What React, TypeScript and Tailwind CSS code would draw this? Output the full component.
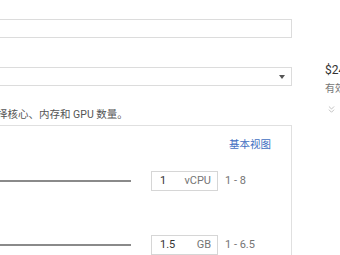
import { ChevronsDown } from "lucide-react";

const font = { fontFamily: '"Roboto", "Noto Sans CJK SC", sans-serif' };

// one row of the custom machine type: slider track + value box + range
const SpecRow = ({ value, unit, range }: { value: string; unit: string; range: string }) => (
  <div className="flex items-center h-[20px]">
    <div className="w-[138px] h-[2px] bg-[#8a8a8a]" />
    <div className="ml-[20px] w-[67px] h-[20px] border border-[#d6d6d6] flex items-center justify-between pl-[8px] pr-[6px] text-[11px] text-[#333]">
      <span>{value}</span>
      <span className="text-[#757575]">{unit}</span>
    </div>
    <span className="ml-[7px] text-[11px] text-[#757575]">{range}</span>
  </div>
);

export default function App() {
  return (
    <div className="w-[340px] h-[255px] overflow-hidden bg-white flex" style={font}>
      {/* Main column, left edge cut off */}
      <div className="ml-[-8px] w-[300px] shrink-0 flex flex-col">
        <div className="mt-[19px] h-[19px] border border-[#dcdcdc]" />

        <div className="mt-[29px] h-[19px] border border-[#dcdcdc] flex items-center justify-end pr-[6px]">
          <div className="w-0 h-0 border-l-[3.5px] border-r-[3.5px] border-t-[4px] border-l-transparent border-r-transparent border-t-[#555]" />
        </div>

        <div className="mt-[22px] h-[14px] leading-[14px] pl-[5px] text-[10.5px] text-[#555] whitespace-nowrap">
          择核心、内存和 GPU 数量。
        </div>

        <div className="mt-[3px] flex-1 border-t border-l border-r border-[#e0e0e0]">
          <div className="pt-[12px] pr-[20px] flex justify-end">
            <a className="text-[10.5px] leading-[14px] text-[#4270c2]">基本视图</a>
          </div>
          <div className="mt-[19px]">
            <SpecRow value="1" unit="vCPU" range="1 - 8" />
          </div>
          <div className="mt-[44px]">
            <SpecRow value="1.5" unit="GB" range="1 - 6.5" />
          </div>
        </div>
      </div>

      {/* Price summary */}
      <div className="ml-[33px] flex flex-col whitespace-nowrap">
        <div className="mt-[63px] text-[12px] leading-[14px] text-[#333]">$24.67</div>
        <div className="mt-[5px] text-[10px] leading-[14px] text-[#757575]">有效时价</div>
        <div className="mt-[8px] ml-[1px] text-[#a8a8a8]">
          <ChevronsDown size={11} strokeWidth={1.5} />
        </div>
      </div>
    </div>
  );
}
